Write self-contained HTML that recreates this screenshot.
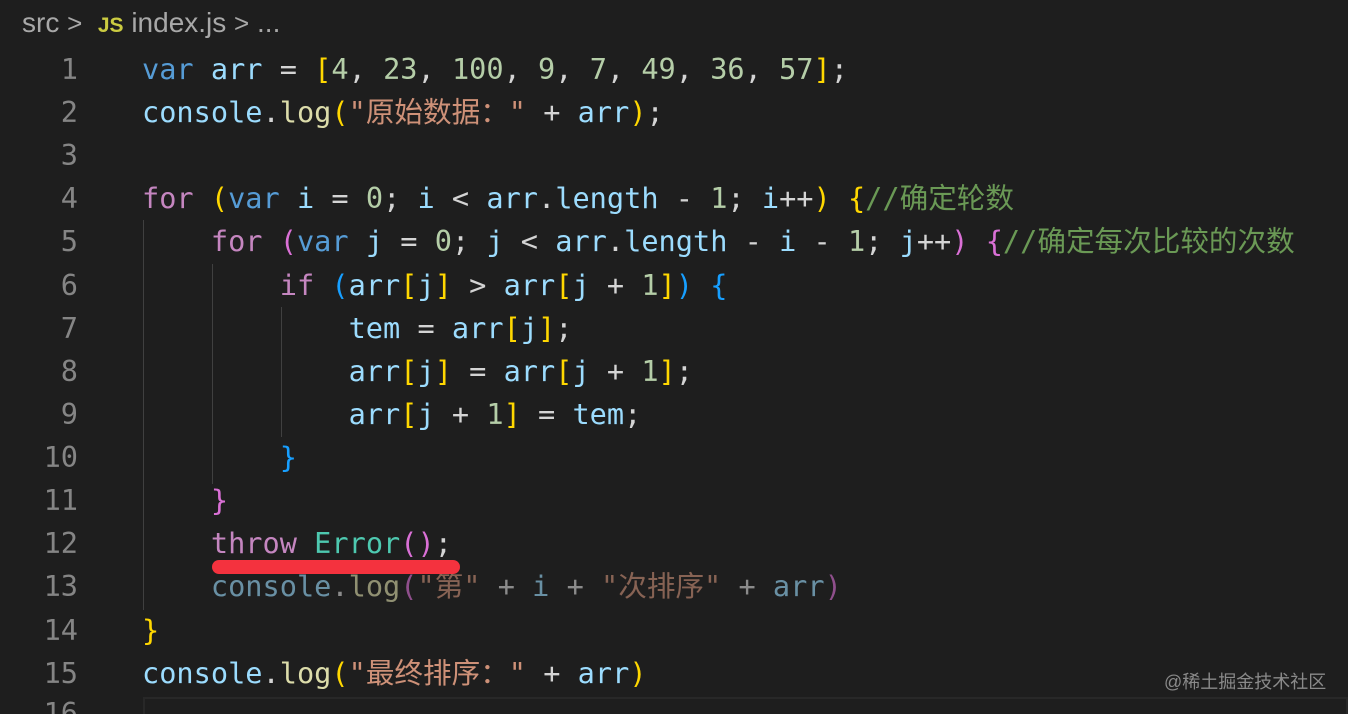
<!DOCTYPE html>
<html style="width:1348px;height:714px;overflow:hidden"><head><meta charset="utf-8"><style>
body{margin:0;width:1348px;height:714px;background:#1e1e1e;overflow:hidden;position:relative;font-family:"DejaVu Sans Mono","Noto Sans CJK SC",monospace;}
.bc{position:absolute;left:22px;top:3px;font-family:"Liberation Sans",sans-serif;font-size:28px;color:#a8a8a8;white-space:pre;line-height:40px}
.js{color:#cbcb41;font-weight:bold;font-size:21px}
.ln{position:absolute;left:0;width:78px;text-align:right;color:#858585;font-size:28.6px;line-height:43px;height:43px}
.l{position:absolute;left:142px;font-size:28.6px;line-height:43px;height:43px;white-space:pre;color:#d4d4d4}
.g{position:absolute;width:1px;background:#404040}
.k{color:#569cd6}.v{color:#9cdcfe}.n{color:#b5cea8}.s{color:#ce9178}.f{color:#dcdcaa}.c{color:#c586c0}.y{color:#ffd700}.p{color:#da70d6}.b{color:#179fff}.t{color:#4ec9b0}.cm{color:#6a9955}
.dim{opacity:.6}
</style></head><body>
<div class="bc">src <span style="font-size:26px">&gt;</span>  <span class="js">JS</span> index.js <span style="font-size:26px">&gt;</span> ...</div>

<div class="g" style="left:143px;top:220px;height:390px"></div>
<div class="g" style="left:212px;top:264px;height:220px"></div>
<div class="g" style="left:281px;top:307px;height:130px"></div>

<div class="ln" style="top:48px">1</div>
<div class="ln" style="top:91px">2</div>
<div class="ln" style="top:134px">3</div>
<div class="ln" style="top:177px">4</div>
<div class="ln" style="top:220px">5</div>
<div class="ln" style="top:264px">6</div>
<div class="ln" style="top:307px">7</div>
<div class="ln" style="top:350px">8</div>
<div class="ln" style="top:393px">9</div>
<div class="ln" style="top:436px">10</div>
<div class="ln" style="top:479px">11</div>
<div class="ln" style="top:522px">12</div>
<div class="ln" style="top:565px">13</div>
<div class="ln" style="top:609px">14</div>
<div class="ln" style="top:652px">15</div>
<div class="ln" style="top:692px">16</div>

<div class="l" style="top:48px"><span class="k">var</span> <span class="v">arr</span> = <span class="y">[</span><span class="n">4</span>, <span class="n">23</span>, <span class="n">100</span>, <span class="n">9</span>, <span class="n">7</span>, <span class="n">49</span>, <span class="n">36</span>, <span class="n">57</span><span class="y">]</span>;</div>
<div class="l" style="top:91px"><span class="v">console</span>.<span class="f">log</span><span class="y">(</span><span class="s">"原始数据："</span> + <span class="v">arr</span><span class="y">)</span>;</div>
<div class="l" style="top:177px"><span class="c">for</span> <span class="y">(</span><span class="k">var</span> <span class="v">i</span> = <span class="n">0</span>; <span class="v">i</span> &lt; <span class="v">arr</span>.<span class="v">length</span> - <span class="n">1</span>; <span class="v">i</span>++<span class="y">)</span> <span class="y">{</span><span class="cm">//确定轮数</span></div>
<div class="l" style="top:220px">    <span class="c">for</span> <span class="p">(</span><span class="k">var</span> <span class="v">j</span> = <span class="n">0</span>; <span class="v">j</span> &lt; <span class="v">arr</span>.<span class="v">length</span> - <span class="v">i</span> - <span class="n">1</span>; <span class="v">j</span>++<span class="p">)</span> <span class="p">{</span><span class="cm">//确定每次比较的次数</span></div>
<div class="l" style="top:264px">        <span class="c">if</span> <span class="b">(</span><span class="v">arr</span><span class="y">[</span><span class="v">j</span><span class="y">]</span> &gt; <span class="v">arr</span><span class="y">[</span><span class="v">j</span> + <span class="n">1</span><span class="y">]</span><span class="b">)</span> <span class="b">{</span></div>
<div class="l" style="top:307px">            <span class="v">tem</span> = <span class="v">arr</span><span class="y">[</span><span class="v">j</span><span class="y">]</span>;</div>
<div class="l" style="top:350px">            <span class="v">arr</span><span class="y">[</span><span class="v">j</span><span class="y">]</span> = <span class="v">arr</span><span class="y">[</span><span class="v">j</span> + <span class="n">1</span><span class="y">]</span>;</div>
<div class="l" style="top:393px">            <span class="v">arr</span><span class="y">[</span><span class="v">j</span> + <span class="n">1</span><span class="y">]</span> = <span class="v">tem</span>;</div>
<div class="l" style="top:436px">        <span class="b">}</span></div>
<div class="l" style="top:479px">    <span class="p">}</span></div>
<div class="l" style="top:522px">    <span class="c">throw</span> <span class="t">Error</span><span class="p">()</span>;</div>
<div class="l dim" style="top:565px">    <span class="v">console</span>.<span class="f">log</span><span class="p">(</span><span class="s">"第"</span> + <span class="v">i</span> + <span class="s">"次排序"</span> + <span class="v">arr</span><span class="p">)</span></div>
<div class="l" style="top:609px"><span class="y">}</span></div>
<div class="l" style="top:652px"><span class="v">console</span>.<span class="f">log</span><span class="y">(</span><span class="s">"最终排序："</span> + <span class="v">arr</span><span class="y">)</span></div>

<div style="position:absolute;left:212px;top:560px;width:248px;height:14px;border-radius:7px;background:#f4323e"></div>
<div style="position:absolute;left:143px;top:697px;width:1205px;height:17px;border:2px solid #282828;border-bottom:none;box-sizing:border-box"></div>
<div style="position:absolute;left:1164px;top:668px;font-family:'Liberation Sans','Noto Sans CJK SC',sans-serif;font-size:18px;color:#8a8a8a">@稀土掘金技术社区</div>
</body></html>
